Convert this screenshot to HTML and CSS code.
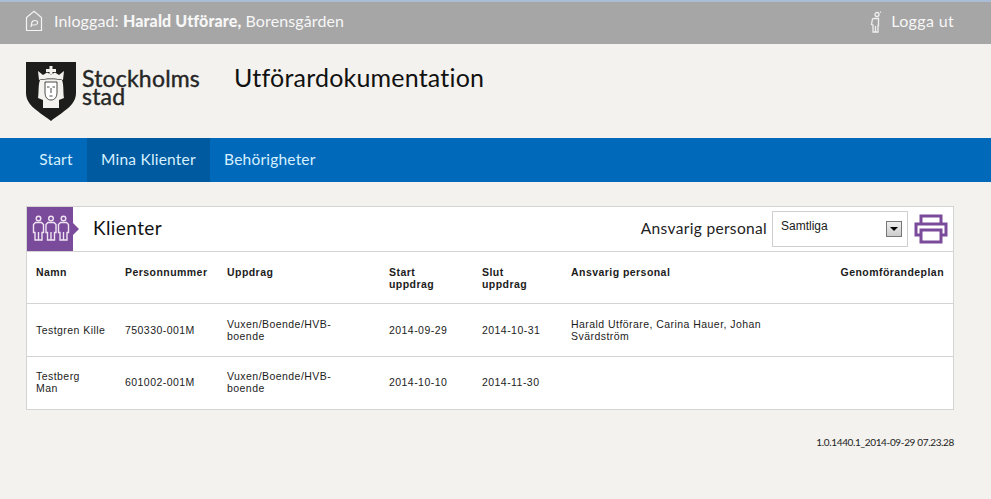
FILE: index.html
```html
<!DOCTYPE html>
<html lang="sv">
<head>
<meta charset="utf-8">
<title>Utförardokumentation</title>
<link rel="stylesheet" href="styles.css">
</head>
<body>
<div class="topbar">
  <div class="user">
    <svg class="home-icon" width="18" height="22" viewBox="0 0 18 22" fill="none" stroke="#f4f4f4" stroke-width="1.2">
      <path d="M1.500 20.500V7.500L9 1.200 16.500 7.500V20.500Z"/>
      <path d="M6 17 6.800 12.500C7.200 10.800 8.500 10.500 10 10.500 12 10.500 12.800 11.500 12.500 13 12.200 14.500 10.800 15 9.500 15H6.500"/>
    </svg>
    <span>Inloggad: <b>Harald Utförare,</b> Borensgården</span>
  </div>
  <a class="logout">
    <svg width="12" height="22" viewBox="0 0 12 22" fill="none" stroke="#efefef" stroke-width="1.3">
      <circle cx="7" cy="3.500" r="2"/>
      <path d="M10 1.500 11 .8"/>
      <path d="M4 7.500H8.500V14.500H8V21H3V14L1.500 13.500 2.500 8Z"/>
      <path d="M5.500 15V21"/>
    </svg>
    <span>Logga ut</span>
  </a>
</div>
<header class="brand">
  <div class="logo">
    <svg class="shield" width="50" height="59" viewBox="0 0 50 59">
      <path d="M0 0H50V31C50 44 36 50 25 59 14 50 0 44 0 31Z" fill="#1d1d1b"/>
      <path d="M23.500 4H26.500V7H30V10H26.500V12H23.500V10H20V7H23.500Z" fill="#f4f2ee"/>
      <path d="M12 9 17 13 21 10.500 25 12.500 29 10.500 33 13 38 9 37 18C32 16 18 16 13 18Z" fill="#f4f2ee"/>
      <path d="M14 18C19 17 31 17 36 18 38 23 37 31 38 36L33 38V46H17V38L12 36C13 31 12 23 14 18Z" fill="#f4f2ee"/>
      <path d="M19 20H31V30C31 35 29 38 25 38S19 35 19 30Z" fill="#fff" stroke="#1d1d1b" stroke-width=".8"/>
      <path d="M21 25H23.500M26.500 25H29M25 26V31M23.500 34H26.500" stroke="#1d1d1b" stroke-width=".8" fill="none"/>
    </svg>
    <div class="logo-text">Stockholms<br>stad</div>
  </div>
  <h1>Utförardokumentation</h1>
</header>
<nav class="nav">
  <a>Start</a>
  <a class="active">Mina Klienter</a>
  <a>Behörigheter</a>
</nav>
<main class="panel">
  <div class="panel-head">
    <div class="badge">
      <svg width="38" height="30" viewBox="0 0 38 30" fill="none" stroke="#f0e4f4" stroke-width="1.400">
        <g id="p">
          <circle cx="6.500" cy="4.500" r="2.300"/>
          <path d="M3.500 8.500H9.500L11.500 10.500V18.500H10V26H3V18.500H1.500V10.500Z"/>
          <path d="M6.500 18V26"/>
        </g>
        <use href="#p" x="12.500"/>
        <use href="#p" x="25"/>
      </svg>
    </div>
    <h2>Klienter</h2>
    <div class="filter">
      <label>Ansvarig personal</label>
      <div class="select"><span>Samtliga</span><i class="arrow"></i></div>
      <svg class="print" width="34" height="30" viewBox="0 0 34 30" fill="none" stroke="#7a4b9a" stroke-width="3">
        <path d="M7 10V2H27V10"/>
        <path d="M7 21H2V10H32V21H27"/>
        <path d="M7 16H27V28H7Z"/>
      </svg>
    </div>
  </div>
  <table class="clients">
    <thead>
      <tr>
        <th class="c1">Namn</th>
        <th class="c2">Personnummer</th>
        <th class="c3">Uppdrag</th>
        <th class="c4">Start<br>uppdrag</th>
        <th class="c5">Slut<br>uppdrag</th>
        <th class="c6">Ansvarig personal</th>
        <th class="c7">Genomförandeplan</th>
      </tr>
    </thead>
    <tbody>
      <tr>
        <td>Testgren Kille</td>
        <td>750330-001M</td>
        <td>Vuxen/Boende/HVB-<br>boende</td>
        <td>2014-09-29</td>
        <td>2014-10-31</td>
        <td>Harald Utförare, Carina Hauer, Johan<br>Svärdström</td>
        <td></td>
      </tr>
      <tr>
        <td>Testberg<br>Man</td>
        <td>601002-001M</td>
        <td>Vuxen/Boende/HVB-<br>boende</td>
        <td>2014-10-10</td>
        <td>2014-11-30</td>
        <td></td>
        <td></td>
      </tr>
    </tbody>
  </table>
</main>
<footer class="version">1.0.1440.1_2014-09-29 07.23.28</footer>
</body>
</html>
```
FILE: styles.css
```css
* { box-sizing: border-box; }
html, body { margin: 0; padding: 0; }
body {
  width: 991px;
  height: 499px;
  overflow: hidden;
  background: #f3f2ee;
  font-family: "Lato", "Liberation Sans", sans-serif;
  color: #1a1a1a;
}
.topbar {
  height: 44px;
  background: #a6a6a6;
  border-top: 2px solid #a9bdd6;
  padding: 0 37px 5px 25px;
  display: flex;
  align-items: center;
  justify-content: space-between;
  color: #f7f7f7;
  font-size: 16px;
}
.user, .logout { display: flex; align-items: center; }
.user { letter-spacing: .12px; }
.logout { letter-spacing: .35px; }
.home-icon { margin-right: 11px; margin-top: 1px; }
.user b { font-weight: 900; }
.logout svg { margin-right: 9px; margin-top: 2px; }
.brand {
  height: 94px;
  padding: 18px 0 0 26px;
  display: flex;
  align-items: flex-start;
}
.logo { display: flex; width: 208px; }
.shield { flex: none; }
.logo-text {
  margin: 7px 0 0 6px;
  font-size: 23px;
  line-height: 18px;
  font-weight: 400;
  letter-spacing: .2px;
  -webkit-text-stroke: .4px #262626;
  color: #262626;
}
.brand h1 {
  margin: 0;
  font-size: 25px;
  line-height: 30px;
  font-weight: 400;
  letter-spacing: .2px;
  color: #111;
}
.nav {
  height: 44px;
  background: #0069ba;
  padding: 0 0 2px 25px;
  display: flex;
}
.nav a {
  padding: 0 14.200px;
  display: flex;
  align-items: center;
  color: #d6f0ff;
  font-size: 15.500px;
  letter-spacing: .2px;
}
.nav a.active { background: #005a9f; margin-bottom: -2px; padding-bottom: 2px; }
.panel {
  margin: 24px 37px 0 26px;
  height: 204px;
  background: #fff;
  border: 1px solid #d4d4d2;
}
.panel-head {
  height: 45px;
  display: flex;
  align-items: center;
  border-bottom: 1px solid #d4d4d2;
}
.badge {
  position: relative;
  width: 46px;
  height: 44px;
  background: #7a4b9a;
  display: flex;
  align-items: center;
  padding-left: 5px;
}
.badge::after {
  content: "";
  position: absolute;
  left: 46px;
  top: 16px;
  border-left: 6px solid #7a4b9a;
  border-top: 6px solid transparent;
  border-bottom: 6px solid transparent;
}
.panel-head h2 {
  margin: 0 0 3px 20px;
  font-size: 19px;
  font-weight: 400;
  letter-spacing: .4px;
  color: #111;
}
.filter {
  margin-left: auto;
  display: flex;
  align-items: center;
  padding-right: 5px;
}
.filter label { font-size: 15.500px; letter-spacing: .33px; margin: 0 5px 2px 0; color: #222; }
.select {
  width: 136px;
  height: 36px;
  border: 1px solid #cfcfcf;
  padding: 0 5px 0 8px;
  display: flex;
  align-items: center;
  justify-content: space-between;
  font: 12px "Liberation Sans", sans-serif;
  background: #fff;
}
.select span { margin-top: -6px; }
.arrow {
  width: 16px;
  height: 16px;
  background: linear-gradient(#eee, #ccc);
  border: 1px solid #777;
  position: relative;
}
.arrow::after {
  content: "";
  position: absolute;
  left: 3px;
  top: 5px;
  border-top: 4px solid #000;
  border-left: 4px solid transparent;
  border-right: 4px solid transparent;
}
.print { margin-left: 6px; }
.clients {
  width: 100%;
  border-collapse: collapse;
  table-layout: fixed;
  font: 10.500px/12px "Liberation Sans", sans-serif;
  letter-spacing: .45px;
  color: #1c1c1c;
}
.clients th { font-weight: 700; text-align: left; vertical-align: top; padding: 14px 9px 0; height: 51px; }
.clients td { height: 53px; padding: 0 9px; vertical-align: middle; border-top: 1px solid #d4d4d2; }
.clients tbody tr:last-child td { padding-bottom: 2px; }
.c1 { width: 89px; }
.c2 { width: 102px; }
.c3 { width: 162px; }
.c4 { width: 93px; }
.c5 { width: 89px; }
.c6 { width: 268px; }
.clients th.c7 { text-align: right; }
.version {
  margin: 26px 37px 0 0;
  text-align: right;
  font-size: 10px;
  letter-spacing: -.35px;
  color: #222;
}
```
